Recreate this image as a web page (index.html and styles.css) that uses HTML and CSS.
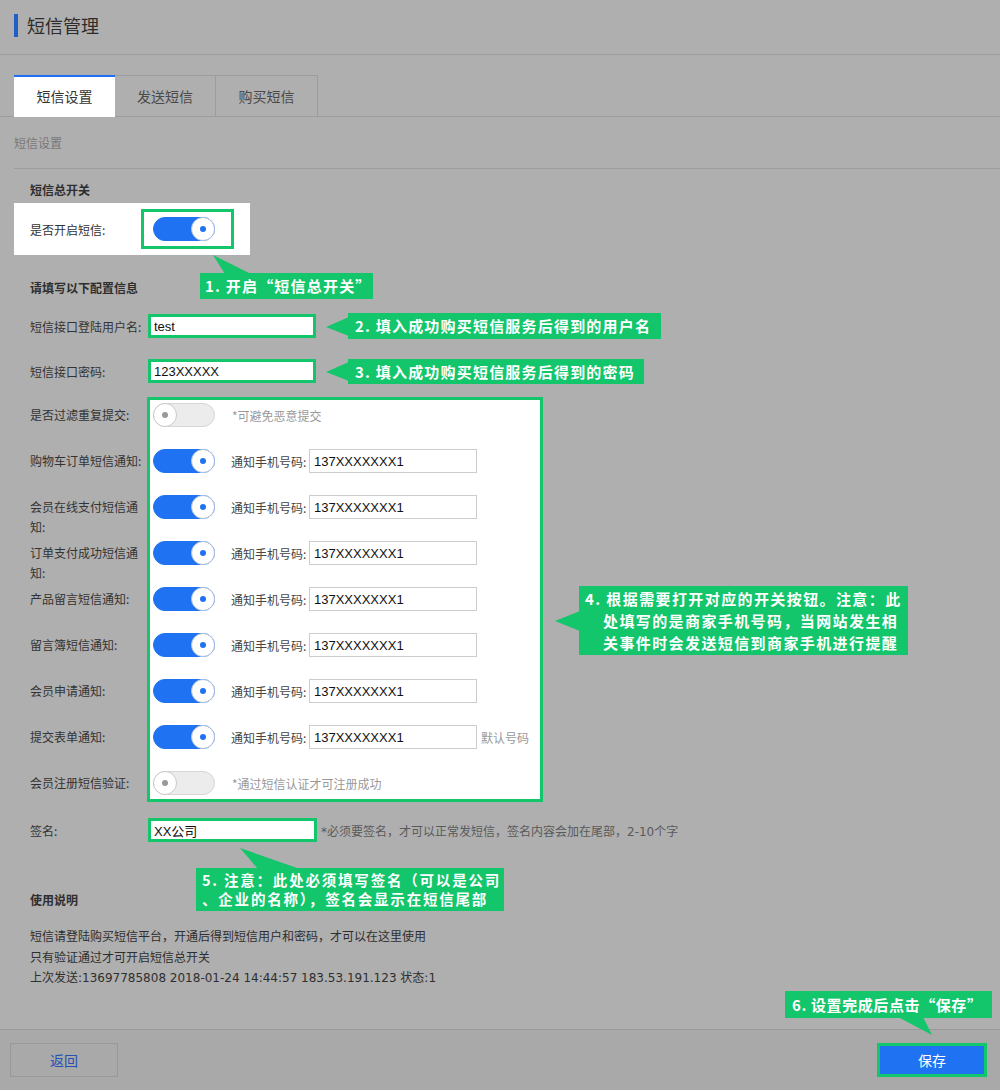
FILE: index.html
```html
<!DOCTYPE html>
<html lang="zh-CN">
<head>
  <meta charset="UTF-8">
  <title>短信管理</title>
  <link rel="stylesheet" href="styles.css">
</head>
<body>
  <div class="page">
    <header class="page-head">
      <h1 class="page-title">短信管理</h1>
    </header>

    <nav class="tabs">
      <a class="tab active">短信设置</a>
      <a class="tab">发送短信</a>
      <a class="tab">购买短信</a>
    </nav>

    <div class="crumb">短信设置</div>

    <form class="form">
      <h3 class="group-title">短信总开关</h3>
      <div class="master">
        <label class="master-label">是否开启短信:</label>
        <div class="mark-switch"><span class="switch on"><i></i></span></div>
      </div>

      <h3 class="group-title title-config">请填写以下配置信息</h3>
      <div class="field">
        <label>短信接口登陆用户名:</label>
        <input class="mark-input" type="text" value="test">
      </div>
      <div class="field field-pass">
        <label>短信接口密码:</label>
        <input class="mark-input" type="text" value="123XXXXX">
      </div>

      <!-- notify switches -->
      <div class="notify">
        <div class="notify-labels">
          <label>是否过滤重复提交:</label>
          <label>购物车订单短信通知:</label>
          <label>会员在线支付短信通知:</label>
          <label>订单支付成功短信通知:</label>
          <label>产品留言短信通知:</label>
          <label>留言簿短信通知:</label>
          <label>会员申请通知:</label>
          <label>提交表单通知:</label>
          <label>会员注册短信验证:</label>
        </div>
        <div class="notify-box">
          <div class="notify-row"><span class="switch"><i></i></span><span class="tip">*可避免恶意提交</span></div>
          <div class="notify-row"><span class="switch on"><i></i></span><span class="phone-label">通知手机号码:</span><input class="phone" type="text" value="137XXXXXXX1"></div>
          <div class="notify-row"><span class="switch on"><i></i></span><span class="phone-label">通知手机号码:</span><input class="phone" type="text" value="137XXXXXXX1"></div>
          <div class="notify-row"><span class="switch on"><i></i></span><span class="phone-label">通知手机号码:</span><input class="phone" type="text" value="137XXXXXXX1"></div>
          <div class="notify-row"><span class="switch on"><i></i></span><span class="phone-label">通知手机号码:</span><input class="phone" type="text" value="137XXXXXXX1"></div>
          <div class="notify-row"><span class="switch on"><i></i></span><span class="phone-label">通知手机号码:</span><input class="phone" type="text" value="137XXXXXXX1"></div>
          <div class="notify-row"><span class="switch on"><i></i></span><span class="phone-label">通知手机号码:</span><input class="phone" type="text" value="137XXXXXXX1"></div>
          <div class="notify-row"><span class="switch on"><i></i></span><span class="phone-label">通知手机号码:</span><input class="phone" type="text" value="137XXXXXXX1"><span class="default-tip">默认号码</span></div>
          <div class="notify-row"><span class="switch"><i></i></span><span class="tip">*通过短信认证才可注册成功</span></div>
        </div>
      </div>

      <div class="field field-sign">
        <label>签名:</label>
        <input class="mark-input" type="text" value="XX公司">
        <span class="sign-tip">*必须要签名，才可以正常发短信，签名内容会加在尾部，2-10个字</span>
      </div>

      <h3 class="group-title title-usage">使用说明</h3>
      <div class="usage">
        <p>短信请登陆购买短信平台，开通后得到短信用户和密码，才可以在这里使用</p>
        <p>只有验证通过才可开启短信总开关</p>
        <p>上次发送:13697785808 2018-01-24 14:44:57 183.53.191.123 状态:1</p>
      </div>
    </form>

    <footer class="foot">
      <button class="btn btn-back" type="button">返回</button>
      <button class="btn btn-save" type="button">保存</button>
    </footer>

    <!-- tutorial callouts laid over the page -->
    <svg class="pointers" width="1000" height="1090" viewBox="0 0 1000 1090">
      <polygon points="213,255 225,274 251,274"/>
      <polygon points="326,327 349,317 349,336"/>
      <polygon points="326,372 349,362 349,381"/>
      <polygon points="555,621 580,611 580,631"/>
      <polygon points="240,848 258,869 300,869"/>
      <polygon points="898,1017 923,1017 932,1035"/>
    </svg>
    <div class="callout c1">1. 开启“短信总开关”</div>
    <div class="callout c2">2. 填入成功购买短信服务后得到的用户名</div>
    <div class="callout c3">3. 填入成功购买短信服务后得到的密码</div>
    <div class="callout c4">4. 根据需要打开对应的开关按钮。注意：此<br>处填写的是商家手机号码，当网站发生相<br>关事件时会发送短信到商家手机进行提醒</div>
    <div class="callout c5">5. 注意：此处必须填写签名（可以是公司<br>、企业的名称），签名会显示在短信尾部</div>
    <div class="callout c6">6. 设置完成后点击“保存”</div>
  </div>
</body>
</html>
```

FILE: styles.css
```css
* {
  margin: 0;
  padding: 0;
  box-sizing: border-box;
}

body {
  font-family: "Noto Sans CJK SC", "Liberation Sans", sans-serif;
  font-size: 12px;
  color: #333;
  background-color: #afafaf;
}

.page {
  position: relative;
  width: 1000px;
  height: 1090px;
  overflow: hidden;
}

/* header */
.page-head {
  height: 55px;
  padding: 14px 14px 0;
  border-bottom: 1px solid #9c9c9c;
}

.page-title {
  font-size: 18px;
  font-weight: normal;
  line-height: 23px;
  color: #2c2c2c;
  border-left: 4px solid #1f5fc8;
  padding-left: 9px;
}

/* tabs */
.tabs {
  display: flex;
  margin-top: 20px;
  padding-left: 14px;
  border-bottom: 1px solid #9c9c9c;
}

.tab {
  width: 101px;
  height: 41px;
  line-height: 40px;
  text-align: center;
  font-size: 14px;
  color: #4a4a4a;
  border-top: 1px solid #9c9c9c;
  border-right: 1px solid #9c9c9c;
  margin-bottom: -1px;
}

.tab.active {
  background-color: #fff;
  color: #333;
  border-top: 2px solid #1f6ff0;
  border-right: none;
  height: 42px;
  line-height: 39px;
}

.tab:last-child {
  width: 102px;
}

.crumb {
  margin-left: 14px;
  height: 52px;
  line-height: 51px;
  color: #787878;
  border-bottom: 1px solid #9c9c9c;
}

/* form */
.form {
  padding-left: 14px;
}

.group-title {
  margin-top: 11px;
  padding-left: 16px;
  line-height: 20px;
  font-size: 12px;
  font-weight: bold;
  color: #2e2e2e;
}

.master {
  display: flex;
  align-items: center;
  width: 236px;
  height: 52px;
  margin-top: 3px;
  padding-left: 16px;
  background-color: #fff;
}

.master-label {
  width: 111px;
}

.mark-switch {
  width: 93px;
  height: 40px;
  padding: 5px 9px;
  border: 3px solid #13c56b;
}

.title-config {
  margin-top: 23px;
}

.field {
  display: flex;
  align-items: center;
  height: 24px;
  margin-top: 16px;
  padding-left: 16px;
}

.field label {
  width: 118px;
}

.field-pass {
  margin-top: 21px;
}

.mark-input {
  width: 168px;
  height: 24px;
  padding: 0 3px;
  border: 3px solid #13c56b;
  background-color: #fff;
  font-family: "Liberation Sans", "Noto Sans CJK SC", sans-serif;
  font-size: 13px;
  color: #111;
  outline: none;
}

/* switch */
.switch {
  position: relative;
  display: inline-block;
  width: 62px;
  height: 24px;
  border-radius: 12px;
  background-color: #ececec;
  border: 1px solid #d6d6d6;
  flex: none;
}

.switch i {
  position: absolute;
  top: -1px;
  left: -1px;
  width: 24px;
  height: 24px;
  border-radius: 50%;
  background-color: #fff;
  border: 1px solid #c9c9c9;
}

.switch i::after {
  content: "";
  position: absolute;
  top: 8px;
  left: 8px;
  width: 6px;
  height: 6px;
  border-radius: 50%;
  background-color: #999;
}

.switch.on {
  background-color: #1f72f2;
  border-color: #1f72f2;
}

.switch.on i {
  left: auto;
  right: -1px;
  border-color: #b3c0d8;
}

.switch.on i::after {
  background-color: #1f72f2;
}

/* notify block */
.notify {
  display: flex;
  margin-top: 14px;
  padding-left: 16px;
}

.notify-labels {
  width: 117px;
  padding-top: 3px;
  display: flex;
  flex-direction: column;
  gap: 16px;
}

.notify-labels label {
  height: 30px;
  padding-top: 5px;
  line-height: 20px;
}

.notify-box {
  width: 396px;
  padding: 0 0 1px 3px;
  border: 3px solid #13c56b;
  background-color: #fff;
  display: flex;
  flex-direction: column;
  gap: 16px;
}

.notify-row {
  display: flex;
  align-items: center;
  height: 30px;
}

.tip {
  margin-left: 17px;
  color: #999;
}

.phone-label {
  margin-left: 16px;
  width: 78px;
  color: #444;
}

.phone {
  width: 168px;
  height: 24px;
  padding: 0 4px;
  border: 1px solid #ccc;
  font-family: "Liberation Sans", sans-serif;
  font-size: 13px;
  color: #111;
  outline: none;
}

.default-tip {
  margin-left: 4px;
  color: #999;
}

.field-sign .mark-input {
  width: 169px;
}

.sign-tip {
  margin-left: 4px;
  font-family: "DejaVu Sans", "Noto Sans CJK SC", sans-serif;
  color: #5a5a5a;
}

.title-usage {
  margin-top: 48px;
}

.usage {
  margin-top: 17px;
  padding-left: 16px;
  font-family: "DejaVu Sans", "Noto Sans CJK SC", sans-serif;
  line-height: 20.5px;
  color: #2e2e2e;
}

/* footer */
.foot {
  display: flex;
  justify-content: space-between;
  margin-top: 40px;
  height: 62px;
  padding: 13px 13px 0 10px;
  border-top: 1px solid #999;
  background-color: #a9a9a9;
}

.btn {
  height: 34px;
  font-family: "Noto Sans CJK SC", sans-serif;
  font-size: 14px;
  cursor: pointer;
}

.btn-back {
  width: 108px;
  border: 1px solid #999;
  background-color: #a9a9a9;
  color: #2650b4;
}

.btn-save {
  width: 110px;
  border: 3px solid #13c56b;
  background-color: #1f72f2;
  color: #fff;
}

/* callouts */
.pointers {
  position: absolute;
  top: 0;
  left: 0;
  pointer-events: none;
}

.pointers polygon {
  fill: #13c56b;
}

.callout {
  position: absolute;
  background-color: #13c56b;
  color: #fff;
  font-size: 15px;
  font-weight: bold;
  letter-spacing: 1.2px;
  white-space: nowrap;
  line-height: 26px;
  padding-left: 6px;
}

.c1 {
  left: 200px;
  top: 273px;
  width: 173px;
  height: 26px;
  padding-left: 5px;
}

.c2 {
  left: 348px;
  top: 313px;
  width: 313px;
  height: 26px;
  padding-left: 7px;
}

.c3 {
  left: 348px;
  top: 359px;
  width: 296px;
  height: 25px;
  padding-left: 7px;
}

.c4 {
  left: 579px;
  top: 586px;
  width: 329px;
  height: 69px;
  padding: 2px 0 0 24px;
  text-indent: -18px;
  line-height: 22px;
  letter-spacing: 1.4px;
}

.c5 {
  left: 196px;
  top: 868px;
  width: 308px;
  height: 43px;
  padding: 2px 0 0 6px;
  font-size: 14.5px;
  line-height: 19px;
  letter-spacing: 1.8px;
}

.c6 {
  left: 785px;
  top: 991px;
  width: 207px;
  height: 27px;
  line-height: 27px;
  padding-left: 7px;
  letter-spacing: 0.6px;
}
```
